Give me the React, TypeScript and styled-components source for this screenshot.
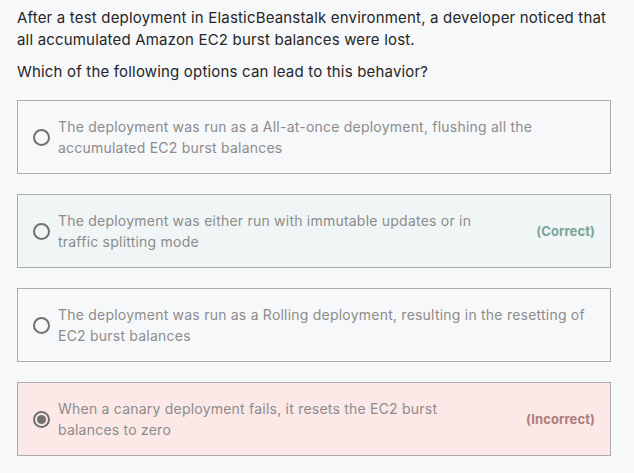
import React from "react";
import styled, { createGlobalStyle } from "styled-components";

const Global = createGlobalStyle`
  html, body { margin: 0; padding: 0; background: #f7f8fa; }
  body { font-family: Inter, "Liberation Sans", sans-serif; }
`;

const Page = styled.div`
  padding: 7px 24px 0 17px;
  width: 634px;
  box-sizing: border-box;
`;

const Question = styled.p`
  margin: 0;
  font-size: 15px;
  line-height: 22px;
  letter-spacing: 0.18px;
  color: #262626;
`;

const Prompt = styled.p`
  margin: 10px 0 0;
  font-size: 15px;
  line-height: 22px;
  letter-spacing: 0.18px;
  color: #262626;
`;

const List = styled.div`
  margin-top: 17px;
  display: flex;
  flex-direction: column;
  gap: 20px;
`;

type Status = "none" | "correct" | "incorrect";

const Card = styled.div<{ $status: Status }>`
  box-sizing: border-box;
  width: 594px;
  height: 74px;
  border: 1px solid #ababab;
  background: ${(p) =>
    p.$status === "correct" ? "#f0f5f5" : p.$status === "incorrect" ? "#fbe8e7" : "#f7f8fa"};
  display: flex;
  align-items: center;
  padding: 0 15px 0 15px;
  gap: 8px;
`;

const Radio = styled.span<{ $checked: boolean }>`
  flex: none;
  width: 17px;
  height: 17px;
  box-sizing: border-box;
  border-radius: 50%;
  border: 2px solid #747070;
  display: flex;
  align-items: center;
  justify-content: center;
  &::after {
    content: "";
    display: ${(p) => (p.$checked ? "block" : "none")};
    width: 9px;
    height: 9px;
    border-radius: 50%;
    background: #747070;
  }
`;

const Text = styled.div<{ $narrow: boolean }>`
  flex: 1;
  max-width: ${(p) => (p.$narrow ? "440px" : "none")};
  font-size: 14px;
  line-height: 21px;
  letter-spacing: 0.22px;
  color: #8c8c8c;
`;

const Verdict = styled.span<{ $status: Status }>`
  flex: none;
  margin-left: auto;
  font-size: 13px;
  font-weight: 700;
  letter-spacing: 0.1px;
  color: ${(p) => (p.$status === "correct" ? "#7ba596" : "#b07d7b")};
`;

const options: { text: string; status: Status; checked: boolean }[] = [
  {
    text: "The deployment was run as a All-at-once deployment, flushing all the accumulated EC2 burst balances",
    status: "none",
    checked: false,
  },
  {
    text: "The deployment was either run with immutable updates or in traffic splitting mode",
    status: "correct",
    checked: false,
  },
  {
    text: "The deployment was run as a Rolling deployment, resulting in the resetting of EC2 burst balances",
    status: "none",
    checked: false,
  },
  {
    text: "When a canary deployment fails, it resets the EC2 burst balances to zero",
    status: "incorrect",
    checked: true,
  },
];

export default function App() {
  return (
    <>
      <Global />
      <Page>
        <Question>
          After a test deployment in ElasticBeanstalk environment, a developer noticed that
          all accumulated Amazon EC2 burst balances were lost.
        </Question>
        <Prompt>Which of the following options can lead to this behavior?</Prompt>
        <List>
          {options.map((o, i) => (
            <Card key={i} $status={o.status}>
              <Radio $checked={o.checked} />
              <Text $narrow={o.status !== "none"}>{o.text}</Text>
              {o.status !== "none" && (
                <Verdict $status={o.status}>
                  {o.status === "correct" ? "(Correct)" : "(Incorrect)"}
                </Verdict>
              )}
            </Card>
          ))}
        </List>
      </Page>
    </>
  );
}
